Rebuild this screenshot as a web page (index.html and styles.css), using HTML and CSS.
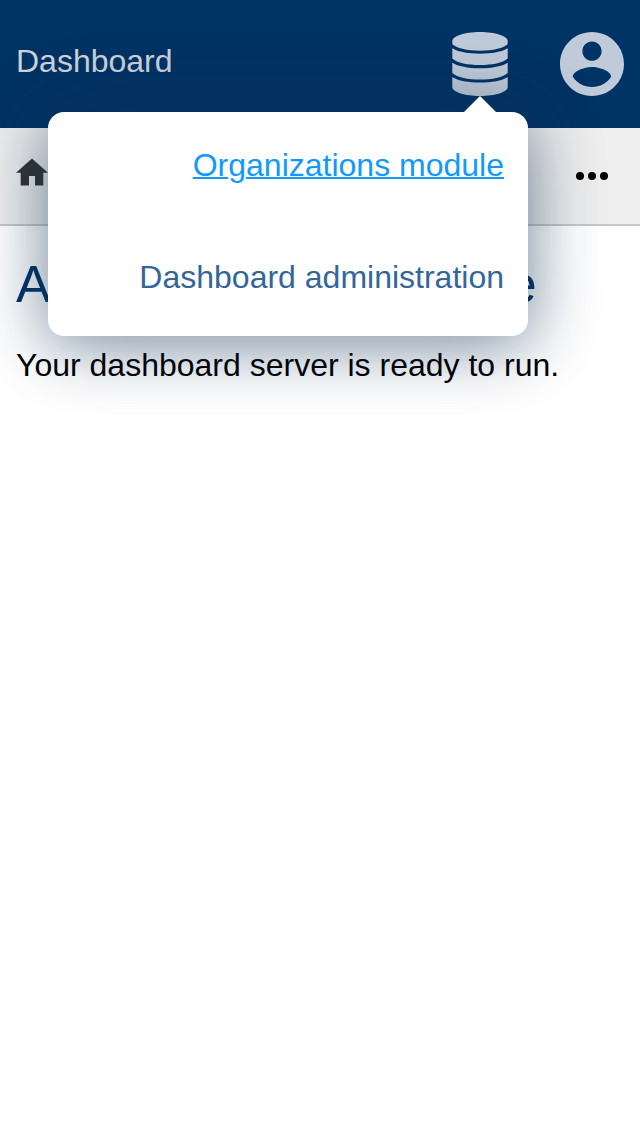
FILE: index.html
```html
<!DOCTYPE html>
<html lang="en">
<head>
<meta charset="utf-8">
<title>Dashboard</title>
<link rel="stylesheet" href="styles.css">
</head>
<body>
<header class="topbar">
  <a class="brand">Dashboard</a>
  <nav class="actions">
    <div class="menu">
      <svg class="icon" viewBox="0 0 64 64" aria-label="Modules">
        <path d="M32 0C47 0 59.700 4 59.700 9V12C56 16 45 18.700 32 18.700S8 16 4.300 12V9C4.300 4 17 0 32 0Z"/>
        <path d="M4.300 16.300C10 20 20 21.700 32 21.700S54 20 59.700 16.300V26.500C55 31 44 33 32 33S9 31 4.300 26.500Z"/>
        <path d="M4.300 30.700C10 34.300 20 36.200 32 36.200S54 34.300 59.700 30.700V41C55 45.500 44 47.600 32 47.600S9 45.500 4.300 41Z"/>
        <path d="M4.300 45C10 48.700 20 50.600 32 50.600S54 48.700 59.700 45V55C59.700 60 47 64 32 64S4.300 60 4.300 55Z"/>
      </svg>
      <div class="dropdown">
        <a class="item active">Organizations module</a>
        <a class="item">Dashboard administration</a>
      </div>
    </div>
    <svg class="icon" viewBox="2 2 20 20" aria-label="Account">
      <path d="M12 2C6.480 2 2 6.480 2 12s4.480 10 10 10 10-4.480 10-10S17.520 2 12 2zm0 3c1.660 0 3 1.340 3 3s-1.340 3-3 3-3-1.340-3-3 1.340-3 3-3zm0 14.200c-2.500 0-4.710-1.280-6-3.220.030-1.990 4-3.080 6-3.080 1.990 0 5.970 1.090 6 3.080-1.290 1.940-3.500 3.220-6 3.220z"/>
    </svg>
  </nav>
</header>
<nav class="crumbs">
  <svg class="home" viewBox="0 0 32 28" aria-label="Home"><path d="M16 0.500L32 14.700H27.300V27.500H19V18H13V27.500H4.700V14.700H0Z"/></svg>
  <svg class="more" viewBox="0 0 32 8" aria-label="More"><circle cx="4" cy="4" r="4"/><circle cx="16" cy="4" r="4"/><circle cx="28" cy="4" r="4"/></svg>
</nav>
<main class="content">
  <h1 class="title">Administration console</h1>
  <p class="lead">Your dashboard server is ready to run.</p>
</main>
</body>
</html>
```
FILE: styles.css
```css
* { box-sizing: border-box; }
body {
  margin: 0;
  background: #fff;
  color: #000;
  font: 32px/48px "Liberation Sans", Arial, sans-serif;
}
.topbar {
  display: flex;
  justify-content: space-between;
  height: 128px;
  padding: 32px 16px;
  background: #036;
}
.brand {
  line-height: 58px;
  color: #ccd3da;
}
.actions { display: flex; gap: 48px; }
.menu { position: relative; height: 64px; }
.icon {
  display: block;
  width: 64px;
  height: 64px;
  fill: rgba(255, 255, 255, .75);
}
.dropdown {
  position: absolute;
  z-index: 1;
  top: 80px;
  right: -16px;
  display: flex;
  flex-direction: column;
  width: 480px;
  height: 224px;
  border-radius: 16px;
  background: #fff;
  box-shadow: 0 0 80px rgba(51, 51, 51, .22), 0 8px 64px rgba(0, 51, 102, .45);
}
.dropdown::before {
  content: "";
  position: absolute;
  top: -16px;
  right: 32px;
  border: 16px solid transparent;
  border-top: 0;
  border-bottom-color: #fff;
}
.item {
  height: 112px;
  padding: 0 24px;
  line-height: 106px;
  text-align: right;
  color: #369;
}
.active { color: #19f; text-decoration: underline 2px; }
.crumbs {
  display: flex;
  justify-content: space-between;
  align-items: center;
  height: 98px;
  padding: 0 32px 0 16px;
  border-bottom: 2px solid #c8c8c8;
  background: #eee;
}
.home { width: 32px; height: 28px; margin-bottom: 8px; fill: #333; }
.more { width: 32px; height: 8px; }
.content { padding: 26px 16px; }
.title {
  margin: 0;
  color: #036;
  font-size: 52px;
  font-weight: 400;
  line-height: 64px;
  word-spacing: -2.5px;
}
.lead { margin: 25px 0 0; }
```
